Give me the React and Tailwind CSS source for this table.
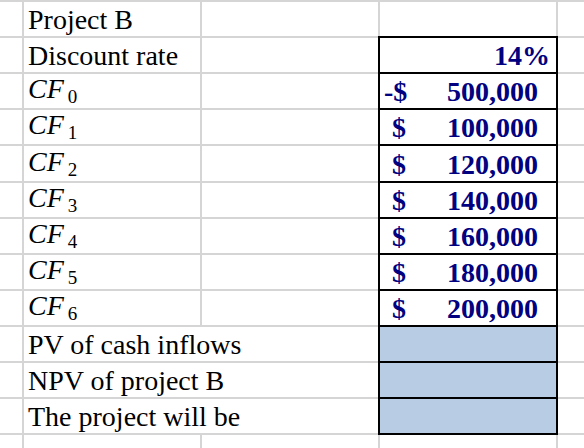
import React from "react";

/* ================= DATA ================= */
const flows = [
  { n: "0", sign: "-$", value: "500,000" },
  { n: "1", sign: "$", value: "100,000" },
  { n: "2", sign: "$", value: "120,000" },
  { n: "3", sign: "$", value: "140,000" },
  { n: "4", sign: "$", value: "160,000" },
  { n: "5", sign: "$", value: "180,000" },
  { n: "6", sign: "$", value: "200,000" },
];

const questions = ["PV of cash inflows", "NPV of project B", "The project will be"];

/* ================= CELLS ================= */
const Cell = ({ children, bg = "bg-white", className = "" }) => (
  <div className={`${bg} flex items-end whitespace-nowrap leading-[31px] pb-[1px] ${className}`}>
    {children}
  </div>
);

const Boxed = ({ children, bg, className = "" }) => (
  <Cell bg={bg} className={`outline-2 outline-black relative z-10 ${className}`}>
    {children}
  </Cell>
);

const Row = ({ label, value, wide }) => (
  <>
    <Cell />
    {wide ? (
      <Cell className="col-span-2 pl-[4px]">{label}</Cell>
    ) : (
      <>
        <Cell className="pl-[4px]">{label}</Cell>
        <Cell />
      </>
    )}
    {value}
    <Cell />
  </>
);

export default function App() {
  return (
    <div
      className="w-[584px] h-[448px] overflow-hidden bg-[#d5d5d5] pt-[2px] text-[28px] text-black"
      style={{ fontFamily: '"Liberation Serif", "Times New Roman", serif' }}
    >
      <div className="grid grid-cols-[22px_176px_176px_176px_26px] grid-rows-[repeat(4,34px)_35px_repeat(7,34px)_14px] gap-[2px]">
        {/* ===== TITLE ===== */}
        <Row label="Project B" value={<Cell />} />

        {/* ===== DISCOUNT RATE ===== */}
        <Row
          label="Discount rate"
          value={
            <Boxed className="justify-end pr-[6px] font-bold text-[#000080]">14%</Boxed>
          }
        />

        {/* ===== CASH FLOWS ===== */}
        {flows.map((f) => (
          <Row
            key={f.n}
            label={
              <span>
                <i>CF</i>
                <span className="text-[19px] relative top-[5px] ml-[4px]">{f.n}</span>
              </span>
            }
            value={
              <Boxed className="justify-between font-bold text-[#000080] pr-[18px]">
                <span className={f.sign === "-$" ? "pl-[4px]" : "pl-[12px]"}>{f.sign}</span>
                <span>{f.value}</span>
              </Boxed>
            }
          />
        ))}

        {/* ===== ANSWERS ===== */}
        {questions.map((q) => (
          <Row key={q} wide label={q} value={<Boxed bg="bg-[#b8cce4]" />} />
        ))}

        <Row label="" value={<Cell />} />
      </div>
    </div>
  );
}
